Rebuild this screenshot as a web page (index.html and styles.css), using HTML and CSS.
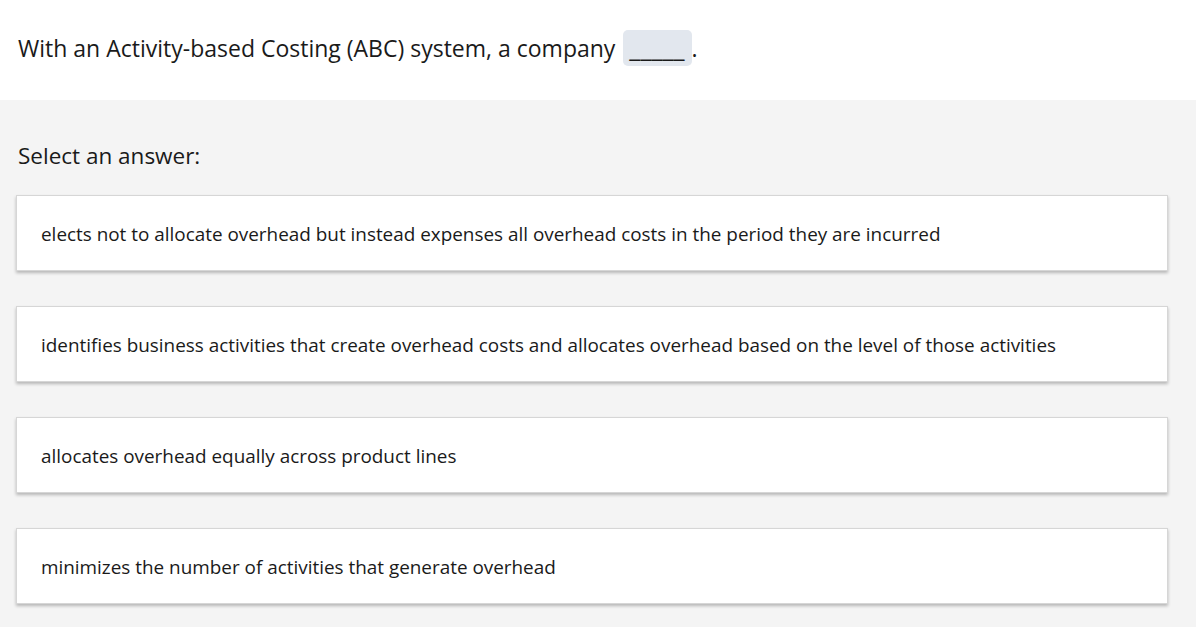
FILE: index.html
```html
<!DOCTYPE html>
<html lang="en">
<head>
    <meta charset="UTF-8">
    <title>Activity-based Costing</title>
    <link rel="stylesheet" href="styles.css">
</head>
<body>
    <div class="question">
        <p class="prompt">With an Activity-based Costing (ABC) system, a company <span class="blank">_____</span>.</p>
    </div>
    <div class="answers">
        <h2 class="answers-title">Select an answer:</h2>
        <ul class="choices">
            <li class="choice">elects not to allocate overhead but instead expenses all overhead costs in the period they are incurred</li>
            <li class="choice">identifies business activities that create overhead costs and allocates overhead based on the level of those activities</li>
            <li class="choice">allocates overhead equally across product lines</li>
            <li class="choice">minimizes the number of activities that generate overhead</li>
        </ul>
    </div>
</body>
</html>
```
FILE: styles.css
```css
body {
    margin: 0;
    font-family: "Open Sans", "Noto Sans", sans-serif;
    color: #1a1a1a;
    background-color: #f4f4f4;
}

.question {
    background-color: #fff;
    height: 100px;
    padding: 0 18px;
    box-sizing: border-box;
}

.prompt {
    margin: 0;
    padding-top: 30px;
    font-size: 23px;
    line-height: 36px;
}

.blank {
    display: inline-block;
    background-color: #e2e7ee;
    border-radius: 5px;
    padding: 0 7px 0 6px;
    margin-left: 2px;
    height: 36px;
    line-height: 34px;
    font-size: 26px;
    font-weight: 600;
    vertical-align: bottom;
}

.answers {
    padding: 0 28px 20px 16px;
}

.answers-title {
    margin: 0;
    padding: 40px 0 23px 2px;
    font-size: 22.5px;
    font-weight: normal;
    line-height: 32px;
}

.choices {
    list-style: none;
    margin: 0;
    padding: 0;
    display: flex;
    flex-direction: column;
    gap: 35px;
}

.choice {
    background-color: #fff;
    border: 1px solid #d6d6d6;
    box-shadow: 0 2px 3px rgba(0, 0, 0, 0.25);
    height: 76px;
    box-sizing: border-box;
    padding: 2px 24px 0;
    display: flex;
    align-items: center;
    font-size: 18.9px;
}
```
